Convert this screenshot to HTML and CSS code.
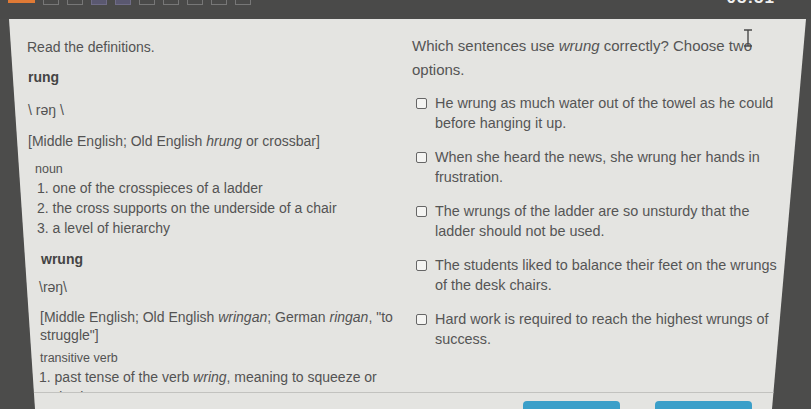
FILE: index.html
```html
<!DOCTYPE html>
<html>
<head>
<meta name="viewport" content="width=device-width, initial-scale=1">
<link rel="stylesheet" href="styles.css">
</head>
<body>

<div class="topbar">
  <div class="tabs">
    <span class="tab current"></span>
    <span class="tab"></span>
    <span class="tab"></span>
    <span class="tab done"></span>
    <span class="tab done"></span>
    <span class="tab"></span>
    <span class="tab"></span>
    <span class="tab"></span>
    <span class="tab"></span>
    <span class="tab"></span>
  </div>
  <div class="timer">05:51</div>
</div>

<div class="panel">
  <div class="main">
    <div class="passage">
      <p class="instr">Read the definitions.</p>

      <p class="word">rung</p>
      <p class="pron">\ rəŋ \</p>
      <p class="etym">[Middle English; Old English <i>hrung</i> or crossbar]</p>
      <p class="pos">noun</p>
      <p class="def">1. one of the crosspieces of a ladder</p>
      <p class="def">2. the cross supports on the underside of a chair</p>
      <p class="def">3. a level of hierarchy</p>

      <p class="word second">wrung</p>
      <p class="pron">\rəŋ\</p>
      <p class="etym">[Middle English; Old English <i>wringan</i>; German <i>ringan</i>, "to struggle"]</p>
      <p class="pos">transitive verb</p>
      <p class="def">1. past tense of the verb <i>wring</i>, meaning to squeeze or and twist</p>
    </div>

    <div class="question">
      <p class="prompt">Which sentences use <i>wrung</i> correctly? Choose two options.</p>
      <span class="cursor">
        <svg width="10" height="18" viewBox="0 0 10 18"><path d="M1 1h8M5 1v16M1 17h8" stroke="#4a4a4a" stroke-width="1.4" fill="none"/></svg>
      </span>

      <label class="option"><span class="box"></span><span>He wrung as much water out of the towel as he could before hanging it up.</span></label>
      <label class="option"><span class="box"></span><span>When she heard the news, she wrung her hands in frustration.</span></label>
      <label class="option"><span class="box"></span><span>The wrungs of the ladder are so unsturdy that the ladder should not be used.</span></label>
      <label class="option"><span class="box"></span><span>The students liked to balance their feet on the wrungs of the desk chairs.</span></label>
      <label class="option"><span class="box"></span><span>Hard work is required to reach the highest wrungs of success.</span></label>
    </div>
  </div>

  <div class="footer">
    <button class="btn"></button>
    <button class="btn"></button>
  </div>
</div>

</body>
</html>
```

FILE: styles.css
```css
/* Page and device frame */
body {
  margin: 0;
  height: 409px;
  overflow: hidden;
  background-color: #4c4c4b;
  font-family: "Liberation Sans", Arial, sans-serif;
  color: #535353;
}

p {
  margin: 0;
}

/* Top navigation strip with question tabs and the timer */
.topbar {
  height: 19px;
  display: flex;
  justify-content: space-between;
  background-color: #4a4a49;
}

.tabs {
  display: flex;
  gap: 8px;
  padding-left: 8px;
}

.tab {
  width: 14px;
  height: 4px;
  border: 1px solid #777;
  border-top: none;
}

.tab.current {
  width: 27px;
  height: 3px;
  border: none;
  background-color: #e07a35;
}

.tab.done {
  border-color: #6f6c86;
  background-color: #5a5870;
}

.timer {
  margin-top: -12px;
  padding-right: 36px;
  font-size: 17px;
  font-weight: bold;
  color: #f0f0f0;
  letter-spacing: 1px;
}

/* The light question panel */
.panel {
  margin-left: 9px;
  width: 797px;
  height: 390px;
  overflow: hidden;
  background-color: #e4e4e1;
  clip-path: polygon(0 0, 100% 0, calc(100% - 34px) 100%, 26px 100%);
  display: flex;
  flex-direction: column;
}

.main {
  flex: none;
  height: 373px;
  overflow: hidden;
  display: grid;
  grid-template-columns: 385px 1fr;
  padding-left: 18px;
}

/* Left column: the dictionary passage */
.passage {
  padding-top: 19px;
  font-size: 14px;
  line-height: 18px;
}

.instr {
  margin-bottom: 12px;
}

.word {
  font-weight: bold;
  color: #444;
  padding-left: 1px;
  margin-bottom: 15px;
}

.word.second {
  margin-top: 12px;
  padding-left: 14px;
  margin-bottom: 10px;
}

.pron {
  padding-left: 1px;
  margin-bottom: 13px;
}

.second + .pron {
  padding-left: 12px;
  margin-bottom: 12px;
}

.etym {
  padding-left: 1px;
  margin-bottom: 10px;
  width: 362px;
}

.second ~ .etym {
  padding-left: 13px;
  margin-bottom: 5px;
}

.pos {
  padding-left: 8px;
  font-size: 12.5px;
}

.second ~ .pos {
  padding-left: 13px;
}

.def {
  padding-left: 10px;
  line-height: 20px;
  width: 350px;
}

.second ~ .def {
  padding-left: 12px;
}

/* Right column: question and answer options */
.question {
  position: relative;
  padding-top: 15px;
  font-size: 14.4px;
  color: #555;
}

.prompt {
  width: 360px;
  font-size: 15px;
  line-height: 24px;
  margin-bottom: 11px;
}

.cursor {
  position: absolute;
  top: 10px;
  left: 331px;
}

.option {
  display: flex;
  gap: 8px;
  padding-left: 4px;
  width: 365px;
  line-height: 20px;
  margin-bottom: 14px;
}

.box {
  flex: none;
  width: 9px;
  height: 9px;
  margin-top: 5px;
  border: 1px solid #666;
  border-radius: 2px;
  background-color: #f4f4f2;
}

/* Bottom bar with the navigation buttons */
.footer {
  border-top: 1px solid #c2c2bf;
  display: flex;
  justify-content: flex-end;
  gap: 35px;
  padding: 8px 54px 0 0;
}

.btn {
  flex: none;
  width: 97px;
  height: 20px;
  border: none;
  border-radius: 4px;
  background-color: #3b9fc9;
}
```
